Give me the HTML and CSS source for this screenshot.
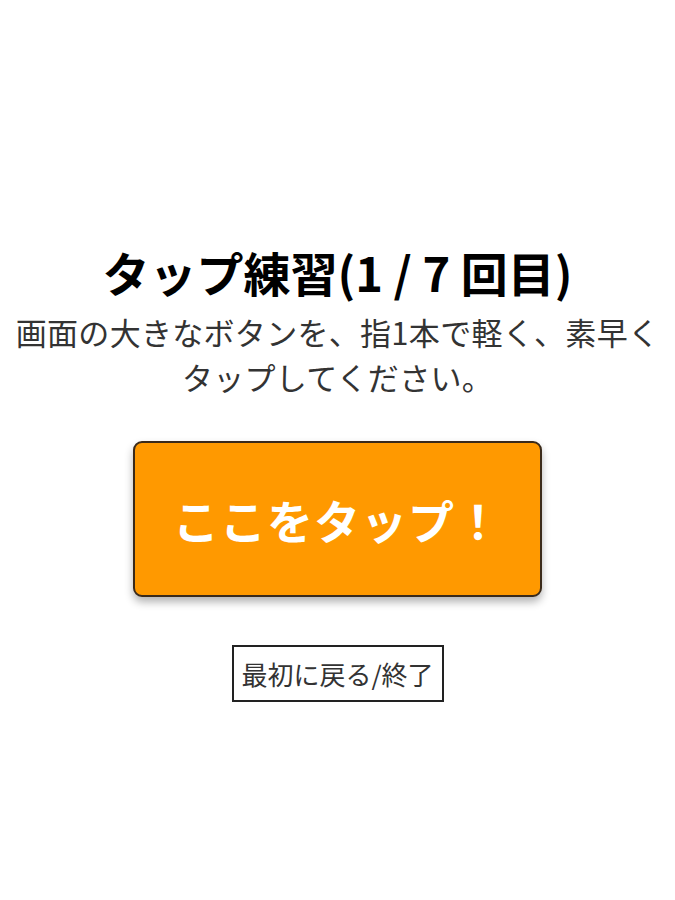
FILE: index.html
```html
<!DOCTYPE html>
<html lang="ja">
<head>
<meta charset="UTF-8" />
<title>タップ練習</title>
<link rel="stylesheet" href="styles.css">
</head>
<body>

<main class="screen">
  <h1 class="title">タップ練習(1 / 7 回目)</h1>
  <p class="desc">画面の大きなボタンを、指1本で軽く、素早く<br>タップしてください。</p>
  <button class="tapBtn">ここをタップ！</button>
  <button class="backBtn">最初に戻る/終了</button>
</main>

</body>
</html>
```

FILE: styles.css
```css
body { margin: 0; background: #fff; font-family: "Noto Sans CJK JP", "Noto Sans", sans-serif; color: #222; }
.screen {
  height: 900px; box-sizing: border-box;
  display: flex; flex-direction: column; align-items: center;
  padding-top: 238px;
}
.title { font-size: 47px; font-weight: bold; margin: 0; line-height: 68px; color: #000; }
.desc { font-size: 31px; margin: 3px 0 0; line-height: 45px; text-align: center; color: #333; letter-spacing: 0.3px; }
.tapBtn {
  margin-top: 42px;
  width: 409px; height: 156px;
  background: #ff9900; color: #fff;
  border: 2px solid #3a2a1a; border-radius: 9px;
  box-shadow: 0 5px 8px rgba(0,0,0,0.3);
  font-family: inherit; font-size: 46px; font-weight: bold; letter-spacing: 1px;
  cursor: pointer;
}
.backBtn {
  margin-top: 48px;
  width: 212px; height: 57px;
  background: #fff; color: #333;
  border: 2px solid #222; border-radius: 0;
  font-family: inherit; font-size: 26px; padding: 0;
  cursor: pointer;
}
```
